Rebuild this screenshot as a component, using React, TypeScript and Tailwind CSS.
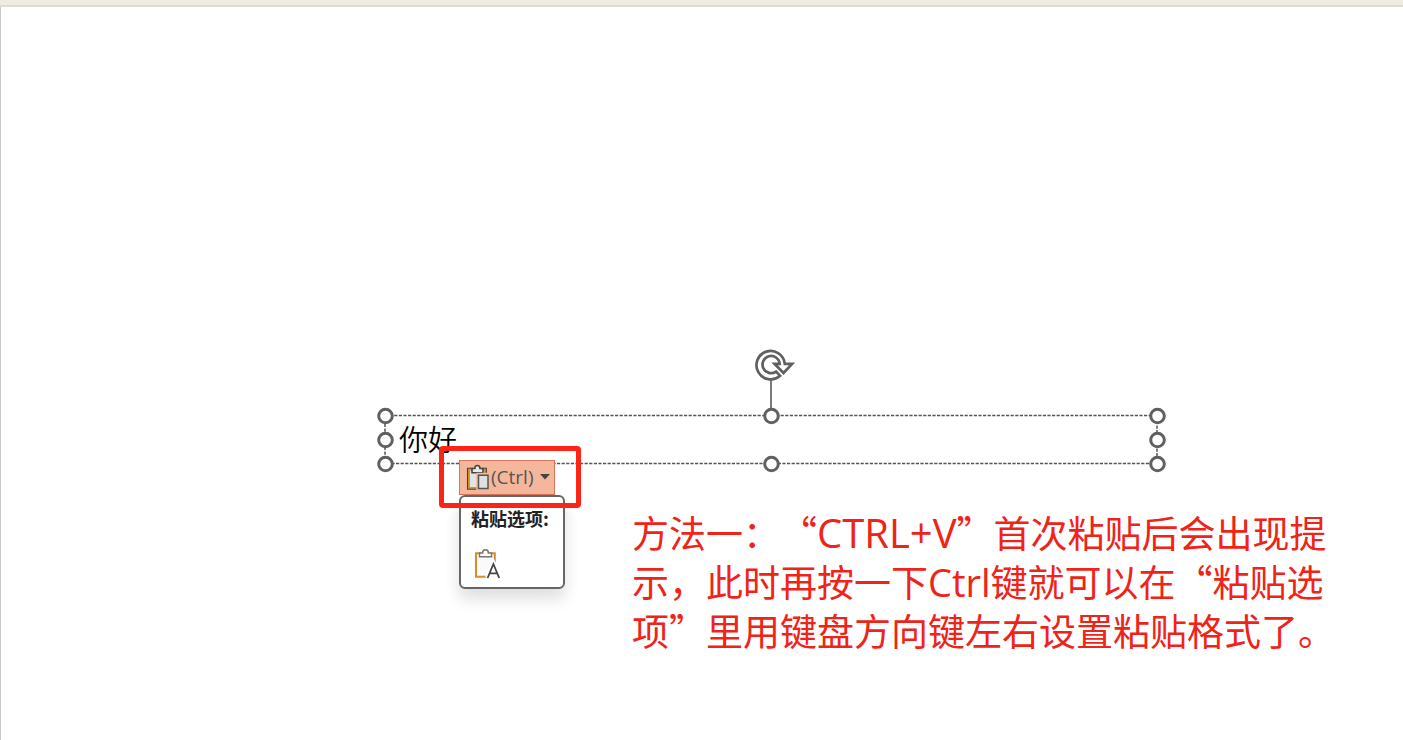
import React from "react";

const cjk = "font-['Noto_Sans_CJK_SC',sans-serif]";
const latin = "font-['Open_Sans','Noto_Sans',sans-serif]";

function SelectionFrame() {
  const handles = [
    [10, 75], [396, 75], [782, 75],
    [10, 99], [782, 99],
    [10, 123], [396, 123], [782, 123],
  ];
  return (
    <svg className="absolute left-0 top-0" width="794" height="134" viewBox="-0.5 0 794 134" fill="none" aria-hidden="true">
      <rect x="9.5" y="74.5" width="772" height="48" stroke="#555" strokeWidth="1.5" strokeDasharray="3.2 1.4" />
      <path d="M395.5 38V68" stroke="#7a7a7a" strokeWidth="2" />
      <path
        d="M409.3 22.8H416.6L408 32L399 22.8H404.2A8.6 8.6 0 1 0 400.6 30.6L404.6 34.8A14.2 14.2 0 1 1 409.3 22.8Z"
        fill="#fff"
        stroke="#606060"
        strokeWidth="2.7"
      />
      {handles.map(([x, y]) => (
        <circle key={`${x}-${y}`} cx={x} cy={y} r="6.8" fill="#fff" stroke="#606060" strokeWidth="3" />
      ))}
    </svg>
  );
}

function PasteIcon() {
  return (
    <svg width="24" height="26" viewBox="0 0 24 26" fill="none" aria-hidden="true">
      <path d="M3 5.5H19V24H3Z" fill="#e3e3e3" stroke="#d2952a" strokeWidth="2" />
      <path d="M1.5 4V25.2H12M1 4.3H7M16 4.3H20.4V10" stroke="#4a4238" strokeWidth="1.1" />
      <path d="M6 8.7V4.5H8.8C8.8 .4 14 .4 14 4.5H17V8.7Z" fill="#e9e9e9" stroke="#444" strokeWidth="1.6" />
      <path d="M12 10.5H22.2V24.3H12Z" fill="#e4e4e4" stroke="#f5b79b" strokeWidth="3.5" />
      <path d="M12.5 11.2H22V24.4H12.5Z" fill="#e0e0e0" stroke="#555" strokeWidth="1.5" />
    </svg>
  );
}

function TextOnlyIcon() {
  return (
    <svg width="28" height="32" viewBox="0 0 28 32" fill="none" aria-hidden="true">
      <path d="M2 5.5H20.5V29H2Z" fill="#fafafa" />
      <path d="M7 5.2H2V28.8H12M16 5.2H20.8V14" stroke="#dc8a2c" strokeWidth="2" />
      <path d="M5.5 8.7V5H8.6C8.6 .5 14.4 .5 14.4 5H17.5V8.7Z" fill="#fff" stroke="#777" strokeWidth="1.5" />
      <path d="M13.6 30L19.4 15.8L25.2 30M15.6 25.4H23.2" stroke="#fff" strokeWidth="5" />
      <path d="M13.6 30L19.4 16L25.2 30M15.6 25.4H23.2" stroke="#444" strokeWidth="1.8" />
    </svg>
  );
}

export default function App() {
  return (
    <div className={`flex min-h-screen flex-col overflow-hidden bg-white ${cjk}`} lang="zh-CN">
      <header className="h-[7px] border-b-2 border-[#dddbd3] bg-[#eeebe0]" />
      <main className="relative flex-1 border-l border-[#c8c8c8] bg-white">
        <section className="absolute left-[374px] top-[334px] h-[134px] w-[794px]" aria-label="文本框">
          <SelectionFrame />
          <p className="absolute left-[24px] top-[77px] text-[29px] leading-[40px] font-[350] text-black">你好</p>
        </section>

        <div className="absolute left-[458px] top-[453px] flex flex-col items-start">
          <button
            type="button"
            className={`flex h-[35px] w-[96px] items-center border border-[#d9735a] bg-[#f5b79b] pb-px pl-[6px] text-[#555] ${latin}`}
          >
            <PasteIcon />
            <span className="ml-px text-[19px] leading-6">(Ctrl)</span>
            <svg className="ml-[6px]" width="10" height="6" viewBox="0 0 10 6" aria-hidden="true">
              <path d="M0 0H10L5 5.5Z" fill="#444" />
            </svg>
          </button>
          <div className="flex w-[106px] flex-col items-start rounded-md border-2 border-[#666] bg-white px-[10px] pb-[7px] pt-[7px] shadow-[0_10px_16px_rgba(0,0,0,0.13)]">
            <h2 className="whitespace-nowrap text-[18px] leading-7 font-bold text-[#222]">粘贴选项:</h2>
            <button type="button" aria-label="只保留文本" className="mt-4 ml-[3px]">
              <TextOnlyIcon />
            </button>
          </div>
        </div>

        <div className="absolute left-[438px] top-[439px] h-[62px] w-[142px] rounded-sm border-[5px] border-[#fb2418]" />

        <p className="absolute left-[631px] top-[501px] whitespace-nowrap text-[37px] leading-[49px] text-[#f02318] [text-spacing-trim:space-all]">
          方法一：“<span className={`inline-block text-[40px] leading-none ${latin}`}>CTRL+V</span>”首次粘贴后会出现提
          <br />
          示，此时再按一下<span className={`inline-block text-[38px] leading-none ${latin}`}>Ctrl</span>键就可以在“粘贴选
          <br />
          项”里用键盘方向键左右设置粘贴格式了。
        </p>
      </main>
    </div>
  );
}
